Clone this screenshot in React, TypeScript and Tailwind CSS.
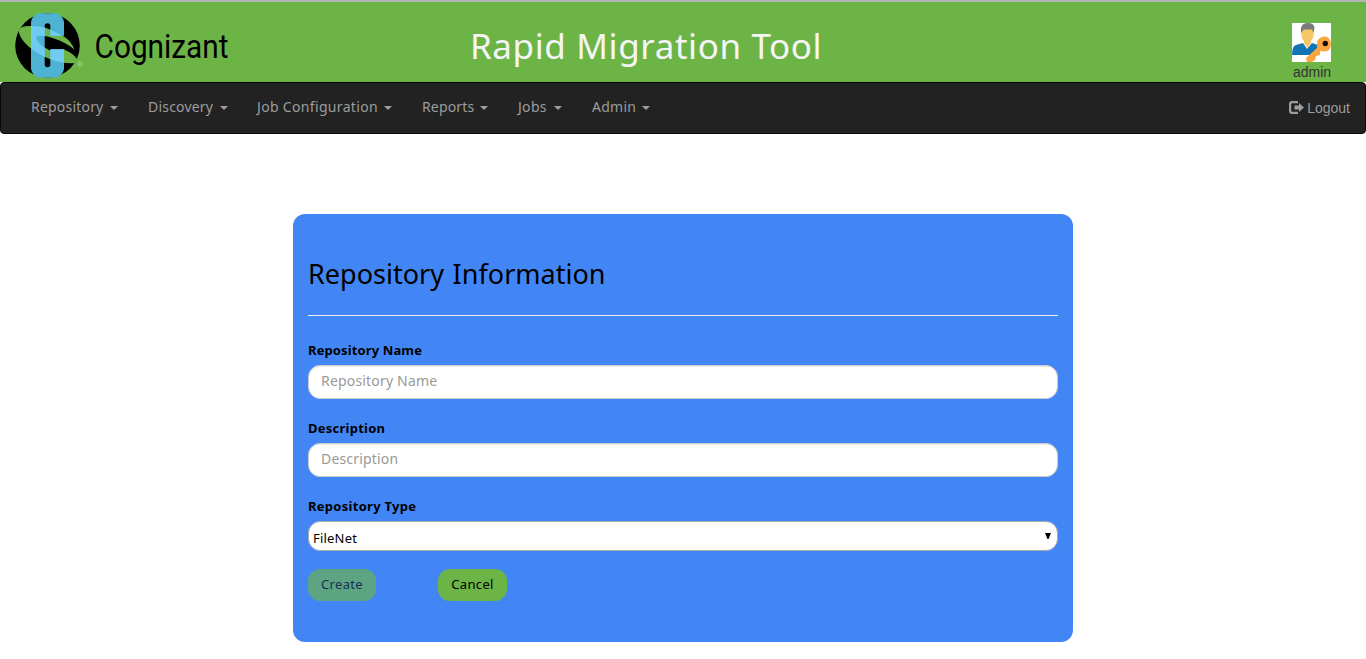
import React from 'react';

const menu = [
  { label: 'Repository', box: 'w-[73px]', gap: 'mr-[30px]', tracking: 'tracking-[0.2px]' },
  { label: 'Discovery', box: 'w-[66px]', gap: 'mr-[29px]', tracking: 'tracking-[0.2px]' },
  { label: 'Job Configuration', box: 'w-[121px]', gap: 'mr-[30px]', tracking: 'tracking-[0.33px]' },
  { label: 'Reports', box: 'w-[52px]', gap: 'mr-[30px]', tracking: 'tracking-[0.15px]' },
  { label: 'Jobs', box: 'w-[30px]', gap: 'mr-[30px]', tracking: 'tracking-[0.3px]' },
  { label: 'Admin', box: 'w-[44px]', gap: '', tracking: 'tracking-[0.25px]' },
];

const swoosh =
  'M19 30Q20 25.800 31 26Q43 26 50 29.500L64 36.500Q71 41 74.500 49.500Q65 42 54 38.500Q46 35 36 36Q36 41 42 46L50 50.500L51 49.300H64L66 50.500Q73 53 77 59Q77 61 75 63.300Q60 64 45 57Q23 46 19 33Z';

function Logo() {
  return (
    <svg className="block overflow-visible" width="240" height="80" viewBox="0 2 240 80">
      <defs>
        <clipPath id="c-letter">
          <path d="M40 13.300H55Q62.500 14.500 64 22V35.700H50.300V26Q50.300 23.300 47.500 23.300T44.700 26V64.500Q44.700 67.300 47.500 67.300T50.300 64.500V49.300H64V69Q62.500 76.500 55 77.700H40Q32.500 76.500 31 69V22Q32.500 14.500 40 13.300Z" />
        </clipPath>
      </defs>
      <circle cx="47.5" cy="45.5" r="32.3" />
      <path d={swoosh} fill="#6cb446" />
      <g clipPath="url(#c-letter)">
        <path d="M30 12H65V79H30Z" fill="#4eb2d3" />
        <path d={swoosh} fill="#70cbf1" />
      </g>
      <text x="77" y="67" fontSize="8" fill="#b5d9a3" fontFamily="Liberation Sans, sans-serif">®</text>
      <text x="94.500" y="58.300" fontSize="34" textLength="134" lengthAdjust="spacingAndGlyphs" fontFamily="Roboto, sans-serif">Cognizant</text>
    </svg>
  );
}

function UserKey() {
  return (
    <svg className="block" width="39" height="39" viewBox="0 0 39 39">
      <path fill="#fff" d="M0 0H39V39H0Z" />
      <path fill="#0f75b5" d="M0 32Q0 23 4 22L11 20L15 26L20 20L29 23L21 32Z" />
      <path fill="#f7c667" d="M10 5H21Q23 14 19 18V20L15.500 25L12 20V18Q8 15 10 5Z" />
      <path fill="#7b7b7b" d="M9 10V5Q10 0 16 0Q22 0 22.500 5L21.500 10L20 6.500H12Z" />
      <path fill="#fba73d" d="M25 19Q27 13.500 33 13.500Q39 14 39 22Q38 29 32 28.500L28 28V32L24 33L23 37L20 39H15L14 35L25 25Z" />
      <circle cx="33.300" cy="20.500" r="2.700" fill="#111" />
    </svg>
  );
}

function Field({ label, tracking, placeholder }: { label: string; tracking: string; placeholder: string }) {
  return (
    <div className="h-[78px]">
      <label className={`block h-[24px] whitespace-nowrap text-[13px] font-bold leading-[18px] ${tracking}`}>{label}</label>
      <input
        placeholder={placeholder}
        className="block h-[34px] w-full rounded-[12px] border border-[#ccc] bg-white px-3 pb-[4px] text-[14px] tracking-[0.18px] shadow-[inset_0_1px_1px_rgba(0,0,0,0.075)] outline-none placeholder:text-[#999]"
      />
    </div>
  );
}

export default function App() {
  return (
    <div className="h-[659px] overflow-hidden bg-white font-['Noto_Sans',sans-serif] text-black">
      <header className="flex h-[82px] border-t-2 border-[#b5b5b5] bg-[#6cb446]">
        <Logo />
        <h1 className="ml-[230px] mt-[19px] w-[360px] whitespace-nowrap text-[35px] leading-[50px] tracking-[0.6px] text-[#f5f5f5]">Rapid Migration Tool</h1>
        <div className="ml-auto mr-[35px] flex w-[39px] flex-col items-center pt-[21px]">
          <UserKey />
          <span className="pl-px font-['Liberation_Sans',sans-serif] text-[14px] leading-[20px] text-[#333]">admin</span>
        </div>
      </header>

      <nav className="flex h-[52px] rounded-[4px] border border-[#080808] bg-[#222] pl-[30px] pr-[15px] text-[#9d9d9d]">
        {menu.map((m) => (
          <a key={m.label} className={`flex h-[46px] items-center whitespace-nowrap text-[14px] ${m.tracking} ${m.gap}`}>
            <span className={m.box}>{m.label}</span>
            <svg className="ml-[6px] mt-[4px]" width="8" height="4" viewBox="0 0 8 4"><path d="M0 0H8L4 4Z" fill="currentColor" /></svg>
          </a>
        ))}
        <a className="ml-auto flex h-[50px] items-center gap-[3px] font-['Liberation_Sans',sans-serif] text-[14px]">
          <svg className="mb-px" width="15" height="13" viewBox="0 0 15 13" fill="currentColor">
            <path d="M3 0H9V2.200H3.200Q2.200 2.200 2.200 3.200V9.800Q2.200 10.800 3.200 10.800H9V13H3Q0 13 0 10V3Q0 0 3 0Z" />
            <path d="M10 2L15 6.500L10 11V8.500H5.500V4.500H10Z" />
          </svg>
          Logout
        </a>
      </nav>

      <main className="mx-auto mt-[80px] h-[428px] w-[780px] rounded-[12px] bg-[#4286f6] px-[15px] pt-[40px]">
        <h2 className="h-[62px] whitespace-nowrap border-b border-[#eee] text-[27px] leading-[39px] tracking-[0.02px] [word-spacing:1.500px]">Repository Information</h2>
        <form className="pt-[25px]">
          <Field label="Repository Name" tracking="tracking-[0.12px]" placeholder="Repository Name" />
          <Field label="Description" tracking="tracking-[0.25px]" placeholder="Description" />
          <label className="block h-[24px] text-[13px] font-bold leading-[18px] tracking-[0.28px]">Repository Type</label>
          <div className="flex h-[30px] justify-between rounded-[12px] border border-[#a9a9a9] bg-white pl-1 pr-[6px]">
            <span className="pt-[7px] text-[13px] leading-[18px] tracking-[0.2px]">FileNet</span>
            <svg className="mt-[11px]" width="6" height="6" viewBox="0 0 6 6"><path d="M0 0H6L3.500 6H2.500Z" /></svg>
          </div>
          <div className="mt-[18px] flex gap-[62px] text-[13px] tracking-[0.35px]">
            <button type="button" disabled className="h-[32px] w-[68px] rounded-[12px] bg-[#6cb446] opacity-65">Create</button>
            <button type="button" className="h-[32px] w-[69px] rounded-[12px] bg-[#6cb446]">Cancel</button>
          </div>
        </form>
      </main>
    </div>
  );
}
